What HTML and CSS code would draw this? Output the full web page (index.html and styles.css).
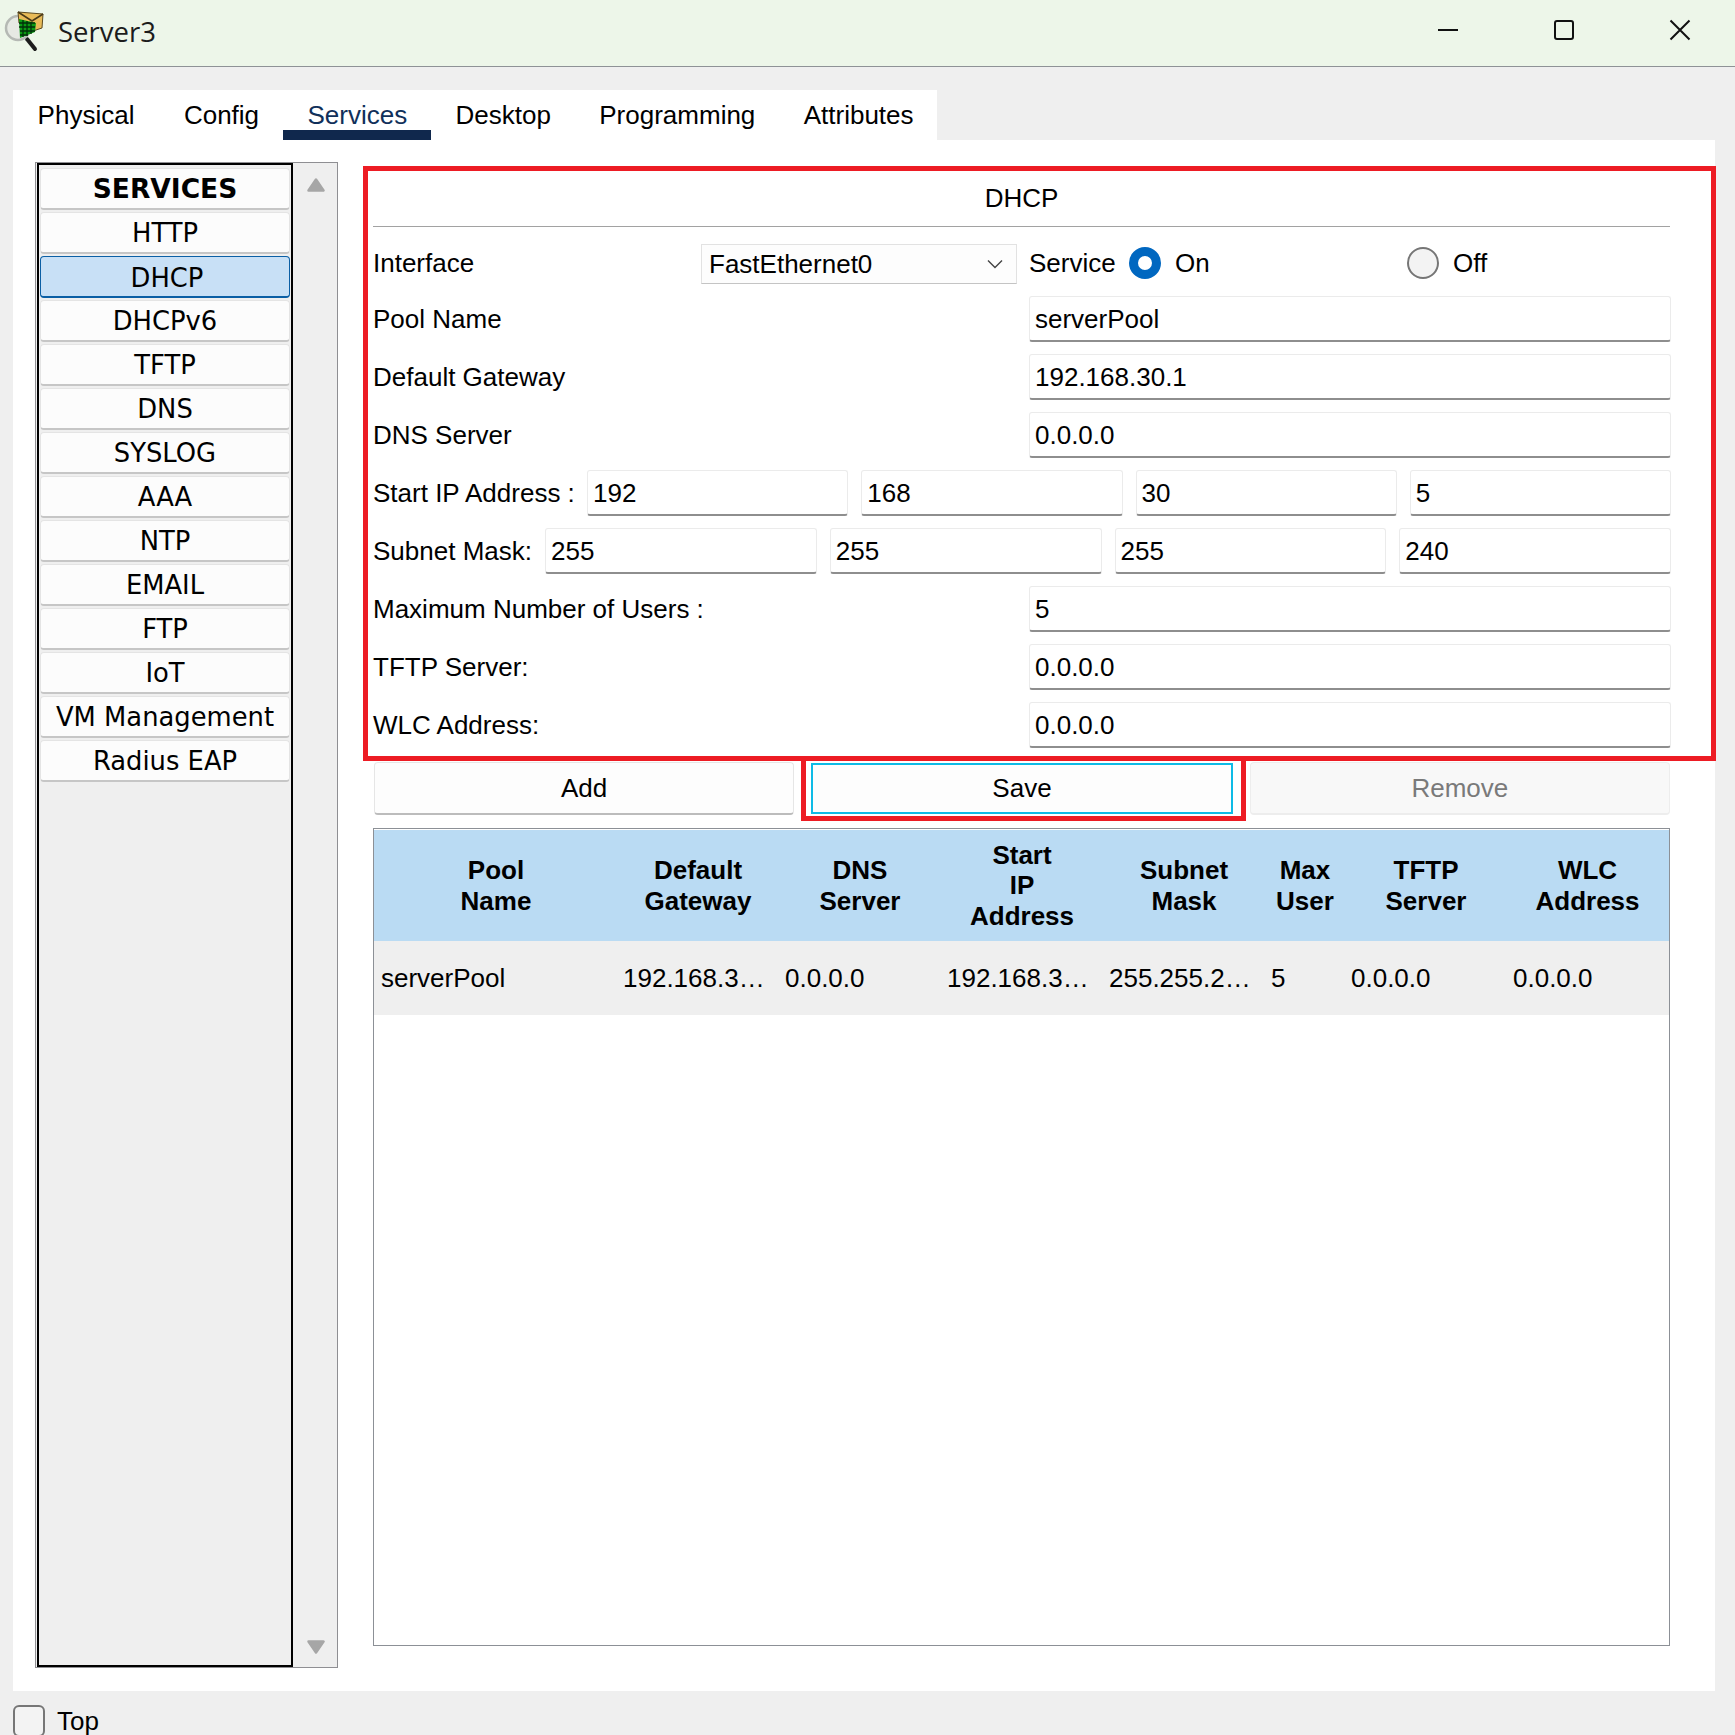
FILE: index.html
```html
<!DOCTYPE html>
<html lang="en">
<head>
<meta charset="utf-8">
<title>Server3</title>
<link rel="stylesheet" href="styles.css">
</head>
<body>
<header class="titlebar">
  <svg class="app-icon" viewBox="0 0 45 50" aria-hidden="true">
    <line x1="27" y1="30" x2="35" y2="40" stroke="#1c1c1c" stroke-width="4" stroke-linecap="round"/>
    <circle cx="18" cy="19" r="12" fill="#e6e9e3" stroke="#b5b9b4" stroke-width="2.5"/>
    <polygon points="18,3 43,5 42,19 33,22 19,14" fill="#e8bb58" stroke="#5c4a20" stroke-width="1"/>
    <polyline points="18,3 32,12 43,5" fill="none" stroke="#4a3a18" stroke-width="1.6"/>
    <polygon points="19,10 32,13 36,14 35,23 20,29" fill="#0a9a12"/>
    <path d="M23 11v17M27 12v15M31 13v12M19 14h16M19 18h16M20 22h15M20 26h8" stroke="#02300a" stroke-width="1.3" fill="none"/>
  </svg>
  <span class="app-title">Server3</span>
  <div class="win-controls">
    <svg class="win-btn" viewBox="0 0 20 20" aria-hidden="true"><line x1="0" y1="10" x2="20" y2="10"/></svg>
    <svg class="win-btn" viewBox="0 0 20 20" aria-hidden="true"><rect x="1" y="1" width="18" height="18" rx="2"/></svg>
    <svg class="win-btn" viewBox="0 0 20 20" aria-hidden="true"><path d="M0.5 0.5L19.5 19.5M19.5 0.5L0.5 19.5"/></svg>
  </div>
</header>

<nav class="tabs">
  <div class="tab">Physical</div>
  <div class="tab">Config</div>
  <div class="tab tab-active">Services</div>
  <div class="tab">Desktop</div>
  <div class="tab">Programming</div>
  <div class="tab">Attributes</div>
</nav>

<main class="panel">
  <aside class="side">
    <div class="side-list">
      <div class="side-item side-head">SERVICES</div>
      <div class="side-item">HTTP</div>
      <div class="side-item side-sel">DHCP</div>
      <div class="side-item">DHCPv6</div>
      <div class="side-item">TFTP</div>
      <div class="side-item">DNS</div>
      <div class="side-item">SYSLOG</div>
      <div class="side-item">AAA</div>
      <div class="side-item">NTP</div>
      <div class="side-item">EMAIL</div>
      <div class="side-item">FTP</div>
      <div class="side-item">IoT</div>
      <div class="side-item">VM Management</div>
      <div class="side-item">Radius EAP</div>
    </div>
    <div class="side-scroll">
      <svg class="arrow" viewBox="0 0 18 14" aria-hidden="true"><path d="M9 1.5L16.5 12.5H1.5Z"/></svg>
      <svg class="arrow" viewBox="0 0 18 14" aria-hidden="true"><path d="M9 12.5L16.5 1.5H1.5Z"/></svg>
    </div>
  </aside>

  <section class="content">
    <h1 class="dhcp-title">DHCP</h1>
    <div class="form">
      <div class="row row-iface">
        <div class="label label-iface">Interface</div>
        <div class="select">
          <span>FastEthernet0</span>
          <svg class="chev" viewBox="0 0 16 10" aria-hidden="true"><path d="M1 1.5L8 8.5L15 1.5"/></svg>
        </div>
        <div class="label label-service">Service</div>
        <div class="radio-group"><span class="radio radio-on"></span><span>On</span></div>
        <div class="radio-group"><span class="radio"></span><span>Off</span></div>
      </div>
      <div class="row">
        <div class="label label-wide">Pool Name</div>
        <div class="field field-wide">serverPool</div>
      </div>
      <div class="row">
        <div class="label label-wide">Default Gateway</div>
        <div class="field field-wide">192.168.30.1</div>
      </div>
      <div class="row">
        <div class="label label-wide">DNS Server</div>
        <div class="field field-wide">0.0.0.0</div>
      </div>
      <div class="row row-gap">
        <div class="label label-start">Start IP Address :</div>
        <div class="field field-flex">192</div>
        <div class="field field-flex">168</div>
        <div class="field field-flex">30</div>
        <div class="field field-flex">5</div>
      </div>
      <div class="row row-gap">
        <div class="label label-mask">Subnet Mask:</div>
        <div class="field field-flex">255</div>
        <div class="field field-flex">255</div>
        <div class="field field-flex">255</div>
        <div class="field field-flex">240</div>
      </div>
      <div class="row">
        <div class="label label-wide">Maximum Number of Users :</div>
        <div class="field field-wide">5</div>
      </div>
      <div class="row">
        <div class="label label-wide">TFTP Server:</div>
        <div class="field field-wide">0.0.0.0</div>
      </div>
      <div class="row">
        <div class="label label-wide">WLC Address:</div>
        <div class="field field-wide">0.0.0.0</div>
      </div>
    </div>

    <div class="buttons">
      <div class="btn">Add</div>
      <div class="btn btn-focus">Save</div>
      <div class="btn btn-off">Remove</div>
    </div>

    <div class="table">
      <div class="t-row t-head">
        <div>Pool<br>Name</div>
        <div>Default<br>Gateway</div>
        <div>DNS<br>Server</div>
        <div>Start<br>IP<br>Address</div>
        <div>Subnet<br>Mask</div>
        <div>Max<br>User</div>
        <div>TFTP<br>Server</div>
        <div>WLC<br>Address</div>
      </div>
      <div class="t-row t-body">
        <div>serverPool</div>
        <div>192.168.3…</div>
        <div>0.0.0.0</div>
        <div>192.168.3…</div>
        <div>255.255.2…</div>
        <div>5</div>
        <div>0.0.0.0</div>
        <div>0.0.0.0</div>
      </div>
    </div>
  </section>

  <div class="mark mark-form"></div>
  <div class="mark mark-save"></div>
</main>

<footer class="footer">
  <span class="check"></span>
  <span>Top</span>
</footer>
</body>
</html>
```
FILE: styles.css
```css
* { box-sizing: border-box; }
html, body { margin: 0; padding: 0; }
body {
  width: 1735px;
  height: 1735px;
  overflow: hidden;
  background: #efefef;
  color: #000;
  font-family: "Liberation Sans", Arial, sans-serif;
  font-size: 26px;
}

/* title bar */
.titlebar {
  display: flex;
  align-items: center;
  height: 67px;
  background: #edf6e9;
  border-bottom: 1px solid #8e9296;
}
.app-icon { width: 45px; height: 50px; margin-top: 2px; flex: none; }
.app-title {
  margin-top: -4px;
  margin-left: 13px;
  font-family: "Open Sans", sans-serif;
  font-size: 27.5px;
  color: #1c1c1c;
}
.win-controls {
  display: flex;
  gap: 96px;
  margin-left: auto;
  margin-right: 45px;
  margin-top: -6px;
}
.win-btn {
  width: 20px;
  height: 20px;
  fill: none;
  stroke: #111;
  stroke-width: 2;
  overflow: visible;
}

/* tabs */
.tabs {
  display: flex;
  width: 924px;
  height: 50px;
  margin: 23px 0 0 13px;
  background: #fff;
}
.tab {
  padding: 10px 24.2px 0;
  line-height: 30px;
  white-space: nowrap;
}
.tab:first-child { padding: 10px 25.3px 0 24.6px; }
.tab-active {
  color: #10305a;
  border-bottom: 10px solid #10284d;
}

/* main panel */
.panel {
  position: relative;
  display: flex;
  width: 1702px;
  height: 1551px;
  margin-left: 13px;
  padding: 22px 0 0 22px;
  background: #fff;
}

/* services list */
.side {
  display: flex;
  flex: none;
  width: 303px;
  height: 1506px;
  background: #efefef;
  border: 1px solid #8f8f93;
}
.side-list {
  display: flex;
  flex-direction: column;
  gap: 2px;
  width: 256px;
  margin-left: 1px;
  padding: 3px 1px 0;
  border: 2px solid #000;
  font-family: "DejaVu Sans", sans-serif;
  font-size: 25.8px;
}
.side-item {
  display: flex;
  align-items: center;
  justify-content: center;
  height: 42px;
  background: #fcfcfc;
  border: 1px solid #e4e4e4;
  border-bottom: 2px solid #c6c6c6;
  border-radius: 4px;
  white-space: nowrap;
}
.side-head { font-weight: 700; font-size: 26.5px; }
.side-sel {
  padding: 3px 0 0 4px;
  background: #c8e0f6;
  border: 1px solid #0b5fa5;
  border-bottom-width: 2px;
}
.side-scroll {
  display: flex;
  flex: 1;
  flex-direction: column;
  justify-content: space-between;
  align-items: center;
  padding: 15px 0 13px 2px;
}
.arrow { width: 18px; height: 14px; fill: #a6a6a6; stroke: #a6a6a6; stroke-width: 2.5; stroke-linejoin: round; }

/* right column */
.content {
  display: flex;
  flex-direction: column;
  flex: none;
  width: 1297px;
  margin-left: 35px;
  padding-top: 5px;
}
.dhcp-title {
  height: 60px;
  margin: 0;
  font-size: 26px;
  font-weight: 400;
  line-height: 62px;
  text-align: center;
  border-bottom: 1px solid #a2a2a2;
}
.form {
  display: flex;
  flex-direction: column;
  gap: 12px;
  margin: 17px -1px 0 0;
}
.row { display: flex; align-items: center; height: 46px; }
.row-gap { gap: 13px; }
.row-iface { height: 40px; }
.label { flex: none; white-space: nowrap; }
.label-iface { width: 328px; padding-bottom: 2px; }
.label-wide { width: 656px; }
.label-start { width: 201px; }
.label-mask { width: 159px; }
.label-service { width: 100px; margin-left: 12px; padding-bottom: 2px; }
.select {
  display: flex;
  flex: none;
  align-items: center;
  justify-content: space-between;
  width: 316px;
  height: 40px;
  padding: 0 13px 0 7px;
  background: #fdfdfd;
  border: 1px solid #e2e2e2;
  border-bottom-color: #c4c4c4;
}
.chev { width: 16px; height: 10px; fill: none; stroke: #444; stroke-width: 1.4; }
.radio-group {
  display: flex;
  flex: none;
  align-items: center;
  gap: 14px;
  width: 278px;
  padding-bottom: 2px;
}
.radio-group:last-child { width: auto; }
.radio {
  width: 32px;
  height: 32px;
  background: #f3f3f3;
  border: 2px solid #767676;
  border-radius: 50%;
}
.radio-on { background: #fff; border: 9.5px solid #0067c0; }
.field {
  height: 46px;
  padding: 0 5px;
  line-height: 44px;
  background: #fff;
  border: 1px solid #ebebeb;
  border-bottom: 2px solid #8e8e8e;
  border-radius: 3px;
}
.field-wide { flex: none; width: 642px; }
.field-flex { flex: 1; min-width: 0; }

/* buttons */
.buttons { display: flex; gap: 15.5px; margin-top: 14px; padding-left: 1px; }
.btn {
  flex: 1;
  height: 53px;
  line-height: 50px;
  text-align: center;
  background: #fdfdfd;
  border: 1px solid #e6e6e6;
  border-bottom: 2px solid #bcbcbc;
  border-radius: 4px;
}
.btn-focus {
  height: 51px;
  margin: 1px 1px 0;
  line-height: 46px;
  border: 2px solid #0ebbe6;
  border-radius: 0;
}
.btn-off { color: #7a7a7a; background: #f8f8f8; border-color: #ededed; }

/* table */
.table {
  height: 818px;
  margin-top: 13px;
  padding: 1px 0 0;
  background: #fff;
  border: 1px solid #8c9096;
}
.t-row {
  display: grid;
  grid-template-columns: 242px 162px 162px 162px 162px 80px 162px 163px;
}
.t-head {
  align-items: center;
  height: 111px;
  background: #badbf3;
  font-weight: 700;
  line-height: 30.5px;
  text-align: center;
}
.t-head > div { padding-left: 2px; }
.t-head > div:last-child { padding-left: 0; }
.t-body {
  align-items: center;
  height: 74px;
  background: #efefef;
}
.t-body > div { padding-left: 7px; white-space: nowrap; }

/* red annotation frames */
.mark { position: absolute; border: 5px solid #ed1c24; pointer-events: none; }
.mark-form { left: 350px; top: 26px; width: 1353px; height: 595px; }
.mark-save { left: 788px; top: 616px; width: 445px; height: 65px; }

/* footer */
.footer {
  display: flex;
  align-items: center;
  gap: 12px;
  margin: 14px 0 0 13px;
}
.check {
  width: 32px;
  height: 32px;
  background: #f3f3f3;
  border: 2px solid #767676;
  border-radius: 6px;
}
```
